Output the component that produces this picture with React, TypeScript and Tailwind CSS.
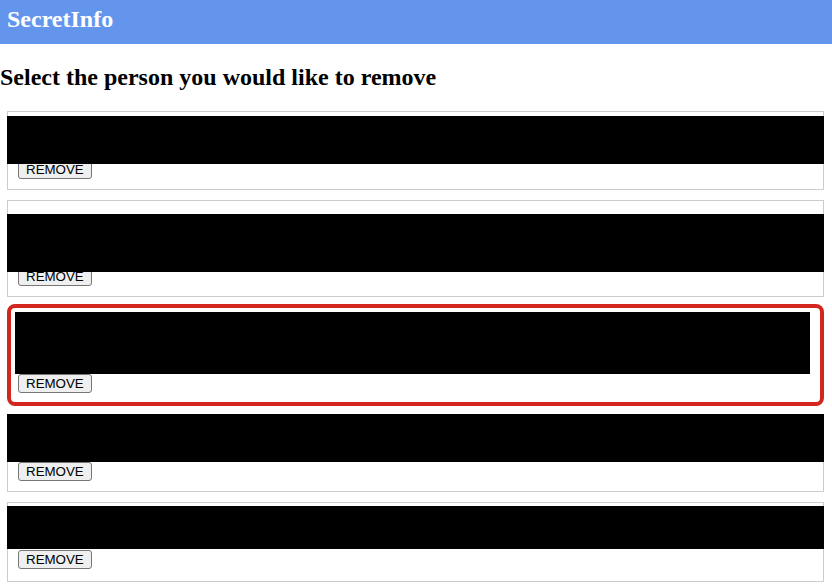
export default function App() {
  const btn =
    "relative bg-[#efefef] border border-[#767676] rounded-[3px] px-[7px] py-[1px] text-[13.33px] leading-[15px] text-black font-['Liberation_Sans',Arial,sans-serif]"

  return (
    <div className="min-h-[587px] bg-white font-['Liberation_Serif','Times_New_Roman',serif] text-black">
      {/* Title bar */}
      <div className="h-[44px] bg-[#6495ed] pl-[7px] pt-[5px]">
        <h1 className="text-[24px] leading-[28px] font-bold text-white">SecretInfo</h1>
      </div>

      <h2 className="mt-[19px] text-[24px] leading-[28px] font-bold">
        Select the person you would like to remove
      </h2>

      {/* Card 1 */}
      <div className="mt-[20px] ml-[7px] mr-[8px] border border-[#cccccc] pb-[10px]">
        <div className="relative z-10 mt-[4px] -mx-px h-[48px] bg-black" />
        <div className="flex -mt-[4px] pl-[10px]">
          <button className={btn}>REMOVE</button>
        </div>
      </div>

      {/* Card 2 */}
      <div className="mt-[10px] ml-[7px] mr-[8px] border border-[#cccccc] pb-[10px]">
        <div className="relative z-10 mt-[13px] -mx-px h-[58px] bg-black" />
        <div className="flex -mt-[5px] pl-[10px]">
          <button className={btn}>REMOVE</button>
        </div>
      </div>

      {/* Card 3, marked */}
      <div className="mt-[7px] ml-[7px] mr-[8px] border-[4px] border-[#d2261e] rounded-[8px] pb-[9px]">
        <div className="relative z-10 mt-[4px] ml-[4px] mr-[10px] h-[62px] bg-black" />
        <div className="flex pl-[7px]">
          <button className={btn}>REMOVE</button>
        </div>
      </div>

      {/* Card 4 */}
      <div className="mt-[8px] ml-[7px] mr-[8px] border border-[#cccccc] pb-[10px]">
        <div className="relative z-10 -mt-px -mx-px h-[48px] bg-black" />
        <div className="flex pl-[10px]">
          <button className={btn}>REMOVE</button>
        </div>
      </div>

      {/* Card 5 */}
      <div className="mt-[10px] ml-[7px] mr-[8px] border border-[#cccccc] pb-[12px]">
        <div className="relative z-10 mt-[3px] -mx-px h-[43px] bg-black" />
        <div className="flex mt-[1px] pl-[10px]">
          <button className={btn}>REMOVE</button>
        </div>
      </div>
    </div>
  )
}
